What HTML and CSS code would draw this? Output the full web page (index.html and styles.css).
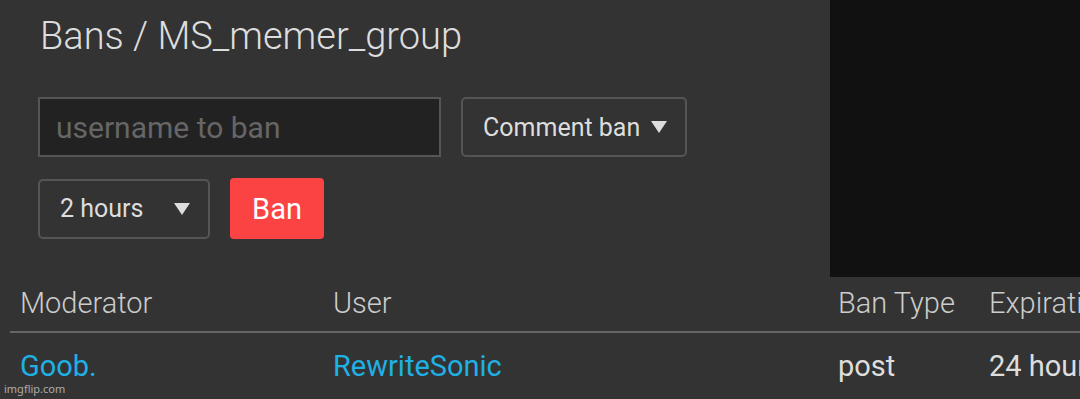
FILE: index.html
```html
<!DOCTYPE html>
<html lang="en">
<head>
    <meta charset="UTF-8">
    <meta name="viewport" content="width=device-width, initial-scale=1.0">
    <title>Bans / MS_memer_group</title>
    <link rel="stylesheet" href="styles.css">
</head>
<body>
    <div class="top">
        <div class="ban-form">
            <h1>Bans / MS_memer_group</h1>
            <div class="form-row">
                <input class="user-input" type="text" placeholder="username to ban">
                <div class="select type-select">Comment ban <span class="caret"></span></div>
            </div>
            <div class="form-row">
                <div class="select time-select">2 hours <span class="caret"></span></div>
                <button class="ban-btn">Ban</button>
            </div>
        </div>
        <div class="side-panel"></div>
    </div>

    <table class="bans">
        <thead>
            <tr>
                <th class="col-mod">Moderator</th>
                <th class="col-user">User</th>
                <th class="col-type">Ban Type</th>
                <th class="col-exp">Expiration</th>
            </tr>
        </thead>
        <tbody>
            <tr>
                <td><a href="#">Goob.</a></td>
                <td><a href="#">RewriteSonic</a></td>
                <td>post</td>
                <td>24 hours</td>
            </tr>
        </tbody>
    </table>

    <div class="watermark">imgflip.com</div>
</body>
</html>
```

FILE: styles.css
```css
html, body {
    height: 100%;
}
body {
    font-family: Roboto, 'Noto Sans', sans-serif;
    margin: 0;
    background-color: #333;
    color: #ddd;
    overflow: hidden;
    position: relative;
}
.top {
    display: flex;
}
.ban-form {
    width: 830px;
    padding: 0 0 0 38px;
    box-sizing: border-box;
}
.side-panel {
    flex: 1;
    height: 277px;
    background: #111;
}
h1 {
    font-size: 38px;
    font-weight: 300;
    color: #ddd;
    margin: 12px 0 0 2px;
    line-height: 48px;
}
.form-row {
    display: flex;
    gap: 20px;
    align-items: center;
}
.ban-form h1 + .form-row {
    margin-top: 37px;
}
.form-row + .form-row {
    margin-top: 21px;
}
.user-input {
    width: 403px;
    height: 60px;
    box-sizing: border-box;
    background: #222;
    border: 2px solid #555;
    color: #ddd;
    font-family: inherit;
    font-size: 30px;
    padding: 0 16px;
    outline: none;
}
.user-input::placeholder {
    color: #666;
}
.select {
    height: 60px;
    box-sizing: border-box;
    border: 2px solid #555;
    border-radius: 5px;
    display: flex;
    align-items: center;
    font-size: 25px;
    color: #ddd;
}
.type-select {
    width: 226px;
    padding: 0 18px 0 20px;
    justify-content: space-between;
}
.time-select {
    width: 172px;
    padding: 0 18px 0 20px;
    justify-content: space-between;
}
.caret {
    width: 0;
    height: 0;
    border-left: 8px solid transparent;
    border-right: 8px solid transparent;
    border-top: 12px solid #ddd;
}
.ban-btn {
    width: 94px;
    height: 61px;
    background: #fc4343;
    border: none;
    border-radius: 4px;
    color: #fff;
    font-family: inherit;
    font-size: 29px;
    padding: 0;
}
.bans {
    border-collapse: collapse;
    table-layout: fixed;
    width: 1200px;
    margin: 0 0 0 10px;
}
.bans th {
    font-weight: 300;
    font-size: 29px;
    color: #ccc;
    text-align: left;
    padding: 9px 10px 11px;
    border-bottom: 2px solid #666;
    white-space: nowrap;
    overflow: hidden;
}
.bans td {
    font-size: 29px;
    color: #ddd;
    padding: 16px 10px;
    white-space: nowrap;
}
.bans a {
    color: #1fb0e4;
    text-decoration: none;
}
.col-mod { width: 293px; }
.col-user { width: 485px; }
.col-type { width: 131px; }
.col-exp { width: 250px; }
.watermark {
    position: absolute;
    left: 4px;
    bottom: 3px;
    font-family: 'Noto Sans', sans-serif;
    font-size: 11px;
    color: rgba(255, 255, 255, 0.6);
}
```
